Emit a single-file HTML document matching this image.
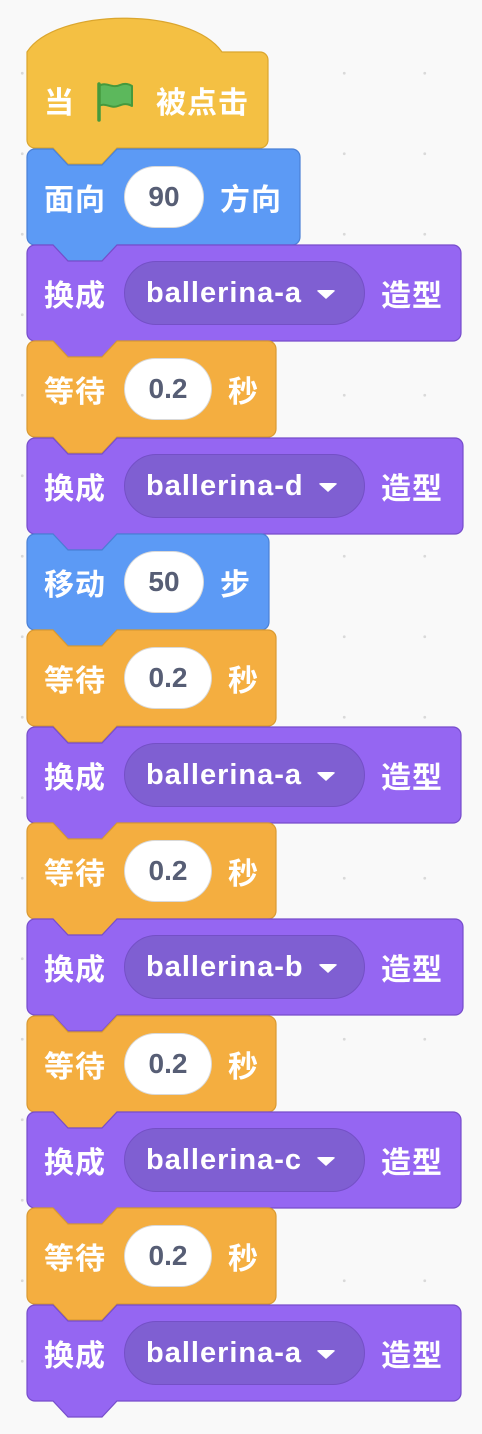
<!DOCTYPE html>
<html><head><meta charset="utf-8"><style>
html,body{margin:0;padding:0}
body{width:482px;height:1434px;position:relative;overflow:hidden;background-color:#f9f9f9;
background-image:radial-gradient(circle,#d9d9d9 1.3px,transparent 1.6px);background-size:80.5px 80.5px;background-position:-18px 33px;
font-family:"Liberation Sans","Noto Sans CJK SC",sans-serif;font-weight:bold}
svg.bg{position:absolute;left:0;top:0}
.row{position:absolute;left:44px;height:96px;display:flex;align-items:center;color:#fff;font-size:30px;white-space:nowrap}
.lbl{width:62px;font-size:30px;letter-spacing:1px}
.pill{margin-left:18px;height:62px;border-radius:31px;background:#fff;border:1px solid rgba(0,0,0,.15);box-sizing:border-box;color:#575e75;display:flex;align-items:center;justify-content:center;font-size:28px}
.dd{margin-left:18px;width:241px;height:64px;border-radius:32px;background:#7f5fd2;border:1px solid #7450c6;box-sizing:border-box;display:flex;align-items:center;padding-left:21px;font-size:29px;letter-spacing:1px}
.tri{display:inline-block;width:0;height:0;border-left:10px solid transparent;border-right:10px solid transparent;border-top:9px solid #fff;border-radius:3px;margin-left:14px;margin-top:3px}
.suf{margin-left:16px;font-size:30px;letter-spacing:1px}
</style></head><body>
<svg class="bg" width="482" height="1434">
<g stroke-width="1.2">
<path d="M27,52 C55,8 190,6 222,52 H260 a8,8 0 0 1 8,8 V140 a8,8 0 0 1 -8,8 H117 l-15,16 h-34 l-15,-16 H35 a8,8 0 0 1 -8,-8 Z" fill="#f4c043" stroke="#dba62e"/>
</g>
<g stroke-width="1.2">
<path transform="translate(27,149)" d="M0,8 a8,8 0 0 1 8,-8 H26 l15,16 h34 l15,-16 H265 a8,8 0 0 1 8,8 V88 a8,8 0 0 1 -8,8 H90 l-15,16 h-34 l-15,-16 H8 a8,8 0 0 1 -8,-8 Z" fill="#5c9af5" stroke="#4a80d6"/>
<path transform="translate(27,245)" d="M0,8 a8,8 0 0 1 8,-8 H26 l15,16 h34 l15,-16 H426 a8,8 0 0 1 8,8 V88 a8,8 0 0 1 -8,8 H90 l-15,16 h-34 l-15,-16 H8 a8,8 0 0 1 -8,-8 Z" fill="#9566f2" stroke="#774dcb"/>
<path transform="translate(27,341)" d="M0,8 a8,8 0 0 1 8,-8 H26 l15,16 h34 l15,-16 H241 a8,8 0 0 1 8,8 V88 a8,8 0 0 1 -8,8 H90 l-15,16 h-34 l-15,-16 H8 a8,8 0 0 1 -8,-8 Z" fill="#f4ae40" stroke="#d99a32"/>
<path transform="translate(27,438)" d="M0,8 a8,8 0 0 1 8,-8 H26 l15,16 h34 l15,-16 H428 a8,8 0 0 1 8,8 V88 a8,8 0 0 1 -8,8 H90 l-15,16 h-34 l-15,-16 H8 a8,8 0 0 1 -8,-8 Z" fill="#9566f2" stroke="#774dcb"/>
<path transform="translate(27,534)" d="M0,8 a8,8 0 0 1 8,-8 H26 l15,16 h34 l15,-16 H234 a8,8 0 0 1 8,8 V88 a8,8 0 0 1 -8,8 H90 l-15,16 h-34 l-15,-16 H8 a8,8 0 0 1 -8,-8 Z" fill="#5c9af5" stroke="#4a80d6"/>
<path transform="translate(27,630)" d="M0,8 a8,8 0 0 1 8,-8 H26 l15,16 h34 l15,-16 H241 a8,8 0 0 1 8,8 V88 a8,8 0 0 1 -8,8 H90 l-15,16 h-34 l-15,-16 H8 a8,8 0 0 1 -8,-8 Z" fill="#f4ae40" stroke="#d99a32"/>
<path transform="translate(27,727)" d="M0,8 a8,8 0 0 1 8,-8 H26 l15,16 h34 l15,-16 H426 a8,8 0 0 1 8,8 V88 a8,8 0 0 1 -8,8 H90 l-15,16 h-34 l-15,-16 H8 a8,8 0 0 1 -8,-8 Z" fill="#9566f2" stroke="#774dcb"/>
<path transform="translate(27,823)" d="M0,8 a8,8 0 0 1 8,-8 H26 l15,16 h34 l15,-16 H241 a8,8 0 0 1 8,8 V88 a8,8 0 0 1 -8,8 H90 l-15,16 h-34 l-15,-16 H8 a8,8 0 0 1 -8,-8 Z" fill="#f4ae40" stroke="#d99a32"/>
<path transform="translate(27,919)" d="M0,8 a8,8 0 0 1 8,-8 H26 l15,16 h34 l15,-16 H428 a8,8 0 0 1 8,8 V88 a8,8 0 0 1 -8,8 H90 l-15,16 h-34 l-15,-16 H8 a8,8 0 0 1 -8,-8 Z" fill="#9566f2" stroke="#774dcb"/>
<path transform="translate(27,1016)" d="M0,8 a8,8 0 0 1 8,-8 H26 l15,16 h34 l15,-16 H241 a8,8 0 0 1 8,8 V88 a8,8 0 0 1 -8,8 H90 l-15,16 h-34 l-15,-16 H8 a8,8 0 0 1 -8,-8 Z" fill="#f4ae40" stroke="#d99a32"/>
<path transform="translate(27,1112)" d="M0,8 a8,8 0 0 1 8,-8 H26 l15,16 h34 l15,-16 H426 a8,8 0 0 1 8,8 V88 a8,8 0 0 1 -8,8 H90 l-15,16 h-34 l-15,-16 H8 a8,8 0 0 1 -8,-8 Z" fill="#9566f2" stroke="#774dcb"/>
<path transform="translate(27,1208)" d="M0,8 a8,8 0 0 1 8,-8 H26 l15,16 h34 l15,-16 H241 a8,8 0 0 1 8,8 V88 a8,8 0 0 1 -8,8 H90 l-15,16 h-34 l-15,-16 H8 a8,8 0 0 1 -8,-8 Z" fill="#f4ae40" stroke="#d99a32"/>
<path transform="translate(27,1305)" d="M0,8 a8,8 0 0 1 8,-8 H26 l15,16 h34 l15,-16 H426 a8,8 0 0 1 8,8 V88 a8,8 0 0 1 -8,8 H90 l-15,16 h-34 l-15,-16 H8 a8,8 0 0 1 -8,-8 Z" fill="#9566f2" stroke="#774dcb"/>
</g>
<g transform="translate(96,82)">
<path d="M3,4 C10,-1 16,7 24,3 C29,1 33,2 36,4 V24 C31,21 27,22 22,24 C15,27 9,20 3,24 Z" fill="#5cb85c" stroke="#45993d" stroke-width="2" stroke-linejoin="round"/>
<line x1="3" y1="2" x2="3" y2="38" stroke="#45993d" stroke-width="3.5" stroke-linecap="round"/>
</g>
</svg>

<div class="row" style="top:52px"><span style="font-size:30px">当</span><span style="margin-left:82px;font-size:30px;letter-spacing:1px">被点击</span></div>

<div class="row" style="top:149px"><span class="lbl">面向</span><span class="pill" style="width:80px">90</span><span class="suf">方向</span></div>
<div class="row" style="top:245px"><span class="lbl">换成</span><span class="dd">ballerina-a<span class="tri"></span></span><span class="suf">造型</span></div>
<div class="row" style="top:341px"><span class="lbl">等待</span><span class="pill" style="width:88px">0.2</span><span class="suf">秒</span></div>
<div class="row" style="top:438px"><span class="lbl">换成</span><span class="dd">ballerina-d<span class="tri"></span></span><span class="suf">造型</span></div>
<div class="row" style="top:534px"><span class="lbl">移动</span><span class="pill" style="width:80px">50</span><span class="suf">步</span></div>
<div class="row" style="top:630px"><span class="lbl">等待</span><span class="pill" style="width:88px">0.2</span><span class="suf">秒</span></div>
<div class="row" style="top:727px"><span class="lbl">换成</span><span class="dd">ballerina-a<span class="tri"></span></span><span class="suf">造型</span></div>
<div class="row" style="top:823px"><span class="lbl">等待</span><span class="pill" style="width:88px">0.2</span><span class="suf">秒</span></div>
<div class="row" style="top:919px"><span class="lbl">换成</span><span class="dd">ballerina-b<span class="tri"></span></span><span class="suf">造型</span></div>
<div class="row" style="top:1016px"><span class="lbl">等待</span><span class="pill" style="width:88px">0.2</span><span class="suf">秒</span></div>
<div class="row" style="top:1112px"><span class="lbl">换成</span><span class="dd">ballerina-c<span class="tri"></span></span><span class="suf">造型</span></div>
<div class="row" style="top:1208px"><span class="lbl">等待</span><span class="pill" style="width:88px">0.2</span><span class="suf">秒</span></div>
<div class="row" style="top:1305px"><span class="lbl">换成</span><span class="dd">ballerina-a<span class="tri"></span></span><span class="suf">造型</span></div>
</body></html>
